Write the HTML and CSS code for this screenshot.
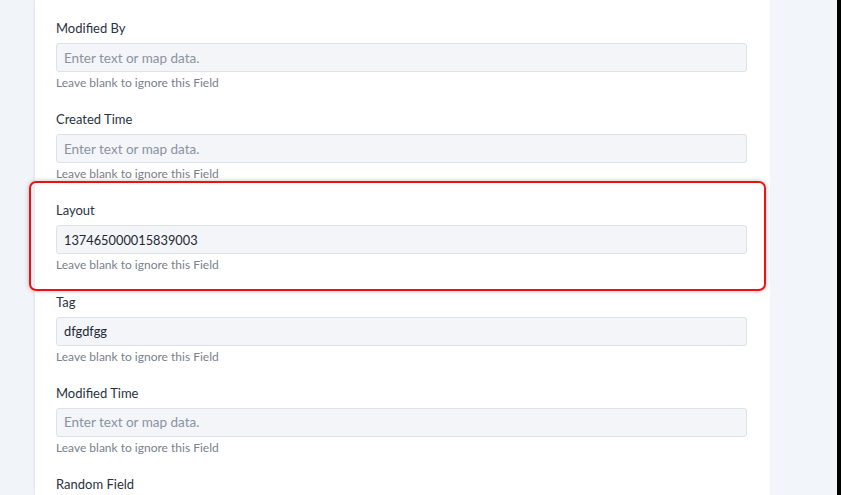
FILE: index.html
```html
<!DOCTYPE html>
<html lang="en">
<head>
    <meta charset="UTF-8">
    <meta name="viewport" content="width=device-width, initial-scale=1.0">
    <title>Record Fields</title>
    <link rel="stylesheet" href="styles.css">
</head>
<body>
    <div class="page">
        <div class="gutter-left"></div>

        <form class="card">
            <div class="field">
                <label class="field-label">Modified By</label>
                <input class="field-input" type="text" placeholder="Enter text or map data.">
                <p class="field-hint">Leave blank to ignore this Field</p>
            </div>

            <div class="field">
                <label class="field-label">Created Time</label>
                <input class="field-input" type="text" placeholder="Enter text or map data.">
                <p class="field-hint">Leave blank to ignore this Field</p>
            </div>

            <!-- highlighted field gets the red frame -->
            <div class="field is-marked">
                <label class="field-label">Layout</label>
                <input class="field-input" type="text" value="137465000015839003">
                <p class="field-hint">Leave blank to ignore this Field</p>
            </div>

            <div class="field">
                <label class="field-label">Tag</label>
                <input class="field-input" type="text" value="dfgdfgg">
                <p class="field-hint">Leave blank to ignore this Field</p>
            </div>

            <div class="field">
                <label class="field-label">Modified Time</label>
                <input class="field-input" type="text" placeholder="Enter text or map data.">
                <p class="field-hint">Leave blank to ignore this Field</p>
            </div>

            <div class="field">
                <label class="field-label">Random Field</label>
            </div>
        </form>

        <div class="gutter-right"></div>
        <div class="edge"></div>
    </div>
</body>
</html>
```

FILE: styles.css
```css
body {
    margin: 0;
    background-color: #f1f4f8;
    font-family: Lato, "Open Sans", sans-serif;
    overflow: hidden;
}

.page {
    display: flex;
    height: 495px;
    overflow: hidden;
}

.gutter-left {
    width: 35px;
    flex-shrink: 0;
}

.card {
    width: 735px;
    flex-shrink: 0;
    box-sizing: border-box;
    padding: 19px 23px 0 21px;
    background-color: #ffffff;
    box-shadow: 0 0 3px rgba(30, 40, 60, 0.12);
    margin: 0;
}

.gutter-right {
    flex: 1;
    background-color: #f2f5f9;
}

.edge {
    width: 4px;
    flex-shrink: 0;
    background-color: #000000;
}

/* --- Fields --- */

.field {
    position: relative;
    margin-bottom: 19.2px;
}

.field-label {
    display: block;
    height: 18px;
    line-height: 18px;
    font-size: 13px;
    color: #2b3240;
    margin-bottom: 6px;
}

.field-input {
    display: block;
    width: 100%;
    height: 29px;
    box-sizing: border-box;
    padding: 0 7px;
    border: 1px solid #dde2ea;
    border-radius: 3px;
    background-color: #f3f5f8;
    font-family: inherit;
    font-size: 12.8px;
    color: #222833;
    outline: none;
}

.field-input::placeholder {
    color: #8a93a2;
    font-size: 13.5px;
}

.field-hint {
    margin: 3px 0 0;
    height: 16px;
    line-height: 16px;
    font-size: 12px;
    color: #79818d;
}

/* Red frame drawn around the marked field */
.field.is-marked::after {
    content: '';
    position: absolute;
    top: -20.5px;
    left: -27px;
    right: -19px;
    bottom: -18px;
    border: 2px solid #f01010;
    border-radius: 7px;
    box-shadow: 0 0 5px rgba(0, 0, 0, 0.25);
    pointer-events: none;
}
```
